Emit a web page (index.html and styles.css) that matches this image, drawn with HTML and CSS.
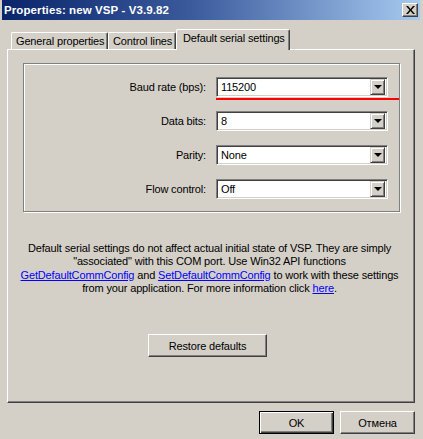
FILE: index.html
```html
<!DOCTYPE html>
<html>
<head>
<meta charset="utf-8">
<link rel="stylesheet" href="styles.css">
</head>
<body>
<div class="window">
  <div class="titlebar">
    <span class="title">Properties: new VSP - V3.9.82</span>
    <span class="close"><svg width="9" height="8" viewBox="0 0 9 8"><path d="M0 0h2l2.5 3 2.5-3h2l-3.5 4 3.5 4h-2l-2.5-3-2.5 3h-2l3.5-4z" fill="#000"/></svg></span>
  </div>
  <div class="tabs">
    <div class="tab">General properties</div>
    <div class="tab">Control lines</div>
    <div class="tab active">Default serial settings</div>
  </div>
  <div class="panel">
    <div class="group">
      <div class="row marked">
        <label>Baud rate (bps):</label>
        <div class="combo"><span class="val">115200</span><span class="arrow"></span></div>
      </div>
      <div class="row">
        <label>Data bits:</label>
        <div class="combo"><span class="val">8</span><span class="arrow"></span></div>
      </div>
      <div class="row">
        <label>Parity:</label>
        <div class="combo"><span class="val">None</span><span class="arrow"></span></div>
      </div>
      <div class="row">
        <label>Flow control:</label>
        <div class="combo"><span class="val">Off</span><span class="arrow"></span></div>
      </div>
    </div>
    <p class="note">Default serial settings do not affect actual initial state of VSP. They are simply<br>"associated" with this COM port. Use Win32 API functions<br><a>GetDefaultCommConfig</a> and <a>SetDefaultCommConfig</a> to work with these settings<br>from your application. For more information click <a>here</a>.</p>
    <div class="center"><button class="btn restore">Restore defaults</button></div>
  </div>
  <div class="footer">
    <button class="btn ok">OK</button>
    <button class="btn">Отмена</button>
  </div>
</div>
</body>
</html>
```
FILE: styles.css
```css
* { box-sizing: border-box; }
html, body { margin: 0; padding: 0; }
body {
  background: #d4d0c8;
  font-family: "Liberation Sans", Arial, sans-serif;
  font-size: 11px;
  letter-spacing: -0.15px;
  color: #000;
}
.window { width: 423px; height: 439px; overflow: hidden; }
.titlebar {
  margin: 0 3px 0 2px;
  height: 20px;
  background: linear-gradient(to right, #0a246a, #3a5a9c 45%, #a6caf0);
  display: flex;
  align-items: center;
  justify-content: space-between;
  padding: 0 2px 0 2px;
}
.title {
  color: #fff;
  font-family: "Liberation Sans", Arial, sans-serif;
  font-weight: bold;
  font-size: 11.5px;
  letter-spacing: 0.1px;
}
.close {
  width: 16px;
  height: 14px;
  background: #d4d0c8;
  border-top: 1px solid #fff;
  border-left: 1px solid #fff;
  border-right: 1px solid #404040;
  border-bottom: 1px solid #404040;
  box-shadow: inset -1px -1px 0 #808080;
  display: flex;
  align-items: center;
  justify-content: center;
}
.tabs {
  display: flex;
  align-items: flex-end;
  margin-top: 9px;
  padding-left: 11px;
  height: 20px;
  position: relative;
  z-index: 1;
}
.tab {
  height: 17px;
  padding: 0 0 0 4px;
  border-top: 1px solid #fff;
  border-left: 1px solid #fff;
  border-right: 1px solid #404040;
  box-shadow: inset -1px 0 0 #808080;
  border-radius: 2px 2px 0 0;
  line-height: 16px;
  white-space: nowrap;
  overflow: hidden;
}
.tab:nth-child(1) { width: 97px; }
.tab:nth-child(2) { width: 68px; }
.tab.active {
  width: 114px;
  height: 21px;
  margin-bottom: -1px;
  background: #d4d0c8;
  line-height: 17px;
  padding: 0 0 3px 6px;
}
.panel {
  margin-left: 7px;
  width: 408px;
  height: 354px;
  border-top: 1px solid #fff;
  border-left: 1px solid #fff;
  border-right: 1px solid #404040;
  border-bottom: 1px solid #404040;
  box-shadow: inset -1px -1px 0 #808080;
  padding-top: 13px;
}
.group {
  margin-left: 15px;
  width: 377px;
  height: 149px;
  border: 1px solid #808080;
  box-shadow: inset 1px 1px 0 #fff, 1px 1px 0 #fff;
  padding: 13px 0 0 0;
  display: flex;
  flex-direction: column;
  gap: 14px;
}
.row {
  display: flex;
  align-items: center;
  height: 20px;
  position: relative;
}
.row label {
  width: 182px;
  text-align: right;
}
.combo {
  margin-left: 10px;
  width: 172px;
  height: 20px;
  background: #fff;
  border-top: 1px solid #808080;
  border-left: 1px solid #808080;
  border-right: 1px solid #fff;
  border-bottom: 1px solid #fff;
  box-shadow: inset 1px 1px 0 #404040, inset -1px -1px 0 #d4d0c8;
  display: flex;
  align-items: center;
  padding: 2px 2px 2px 4px;
}
.val { flex: 1; }
.arrow {
  width: 15px;
  height: 16px;
  background: #d4d0c8;
  border-top: 1px solid #d4d0c8;
  border-left: 1px solid #d4d0c8;
  border-right: 1px solid #404040;
  border-bottom: 1px solid #404040;
  box-shadow: inset 1px 1px 0 #fff, inset -1px -1px 0 #808080;
  position: relative;
}
.arrow::after {
  content: "";
  position: absolute;
  left: 3px;
  top: 5px;
  border-left: 4px solid transparent;
  border-right: 4px solid transparent;
  border-top: 4px solid #000;
}
.marked::after {
  content: "";
  position: absolute;
  left: 192px;
  width: 183px;
  top: 21px;
  height: 2px;
  background: #f00;
}
.note {
  margin: 30px 0 0 0;
  text-align: center;
  line-height: 13.3px;
  white-space: nowrap;
  padding-right: 3px;
}
.note a { color: #0000ff; text-decoration: underline; }
.center { display: flex; justify-content: center; margin-top: 39px; padding-right: 7px; }
.btn {
  font-family: "Liberation Sans", Arial, sans-serif;
  font-size: 11px;
  letter-spacing: -0.15px;
  color: #000;
  background: #d4d0c8;
  height: 23px;
  border-top: 1px solid #fff;
  border-left: 1px solid #fff;
  border-right: 1px solid #404040;
  border-bottom: 1px solid #404040;
  box-shadow: inset -1px -1px 0 #808080;
  padding: 0;
  margin: 0;
}
.restore { width: 119px; }
.footer {
  display: flex;
  justify-content: flex-end;
  gap: 6px;
  margin-top: 8px;
  padding-right: 8px;
}
.footer .btn { width: 75px; }
.btn.ok {
  border: 1px solid #000;
  box-shadow: inset 1px 1px 0 #fff, inset -1px -1px 0 #404040, inset -2px -2px 0 #808080;
}
```
